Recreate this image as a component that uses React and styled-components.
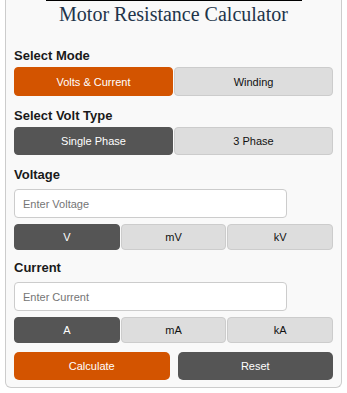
import React, { useState } from "react";
import styled, { createGlobalStyle, css } from "styled-components";

const GlobalStyle = createGlobalStyle`
  html, body { margin: 0; padding: 0; background: #ffffff; }
  body { font-family: "Liberation Sans", Arial, sans-serif; }
  * { box-sizing: border-box; }
`;

const Card = styled.div`
  margin: 0 5px;
  background: #f9f9f9;
  border: 1px solid #cccccc;
  border-top: none;
  border-radius: 0 0 6px 6px;
  padding: 0 8px 7px;
`;

const TopRule = styled.div`
  width: 256px;
  height: 1px;
  margin: 0 auto;
  background: #000000;
`;

const Title = styled.h1`
  margin: 1px 0 22px;
  font-family: "Liberation Serif", "Times New Roman", serif;
  font-weight: normal;
  font-size: 20px;
  line-height: 24px;
  text-align: center;
  color: #22344a;
`;

const Group = styled.section`
  display: flex;
  flex-direction: column;
  margin-top: ${(p) => p.$gap ?? 12}px;
`;

const Label = styled.label`
  display: block;
  font-size: 13px;
  font-weight: bold;
  line-height: 15px;
  color: #1a1a1a;
  margin-bottom: 4px;
`;

const Segmented = styled.div`
  display: flex;
  gap: 1px;
`;

const variants = {
  orange: css`
    background: #d35400;
    border-color: #d35400;
    color: #ffffff;
  `,
  dark: css`
    background: #555555;
    border-color: #555555;
    color: #ffffff;
  `,
  idle: css`
    background: #dddddd;
    border-color: #cccccc;
    color: #111111;
  `,
};

const SegButton = styled.button`
  flex: 1 1 0;
  height: ${(p) => p.$h || 28}px;
  border: 1px solid;
  border-radius: 4px;
  font-family: "Liberation Sans", Arial, sans-serif;
  font-size: 11px;
  padding: 0;
  cursor: pointer;
  ${(p) => variants[p.$variant]}
`;

const Input = styled.input`
  width: 273px;
  height: 29px;
  margin-top: 3px;
  margin-bottom: 6px;
  padding: 0 8px;
  background: #ffffff;
  border: 1px solid #cccccc;
  border-radius: 4px;
  font-family: "Liberation Sans", Arial, sans-serif;
  font-size: 11px;
  color: #222222;
  outline: none;
  &::placeholder { color: #757575; }
`;

const Actions = styled.div`
  display: flex;
  gap: 8px;
  margin-top: 9px;
`;

const ActionButton = styled.button`
  flex: 1 1 0;
  height: 28px;
  border: none;
  border-radius: 5px;
  font-family: "Liberation Sans", Arial, sans-serif;
  font-size: 11px;
  color: #ffffff;
  cursor: pointer;
  background: ${(p) => (p.$primary ? "#d35400" : "#555555")};
`;

function Choice({ options, value, onChange, active, height }) {
  return (
    <Segmented>
      {options.map((o) => (
        <SegButton
          key={o}
          $h={height}
          $variant={o === value ? active : "idle"}
          onClick={() => onChange(o)}
        >
          {o}
        </SegButton>
      ))}
    </Segmented>
  );
}

export default function App() {
  const [mode, setMode] = useState("Volts & Current");
  const [phase, setPhase] = useState("Single Phase");
  const [vu, setVu] = useState("V");
  const [cu, setCu] = useState("A");
  const [v, setV] = useState("");
  const [c, setC] = useState("");

  return (
    <>
      <GlobalStyle />
      <Card>
        <TopRule />
        <Title>Motor Resistance Calculator</Title>
        <Group $gap={0}>
          <Label>Select Mode</Label>
          <Choice
            options={["Volts & Current", "Winding"]}
            value={mode}
            onChange={setMode}
            active="orange"
            height={29}
          />
        </Group>
        <Group>
          <Label>Select Volt Type</Label>
          <Choice
            options={["Single Phase", "3 Phase"]}
            value={phase}
            onChange={setPhase}
            active="dark"
          />
        </Group>
        <Group $gap={12}>
          <Label>Voltage</Label>
          <Input
            placeholder="Enter Voltage"
            value={v}
            onChange={(e) => setV(e.target.value)}
          />
          <Choice
            options={["V", "mV", "kV"]}
            value={vu}
            onChange={setVu}
            active="dark"
            height={26}
          />
        </Group>
        <Group $gap={10}>
          <Label>Current</Label>
          <Input
            placeholder="Enter Current"
            value={c}
            onChange={(e) => setC(e.target.value)}
          />
          <Choice
            options={["A", "mA", "kA"]}
            value={cu}
            onChange={setCu}
            active="dark"
            height={26}
          />
        </Group>
        <Actions>
          <ActionButton $primary>Calculate</ActionButton>
          <ActionButton>Reset</ActionButton>
        </Actions>
      </Card>
    </>
  );
}
